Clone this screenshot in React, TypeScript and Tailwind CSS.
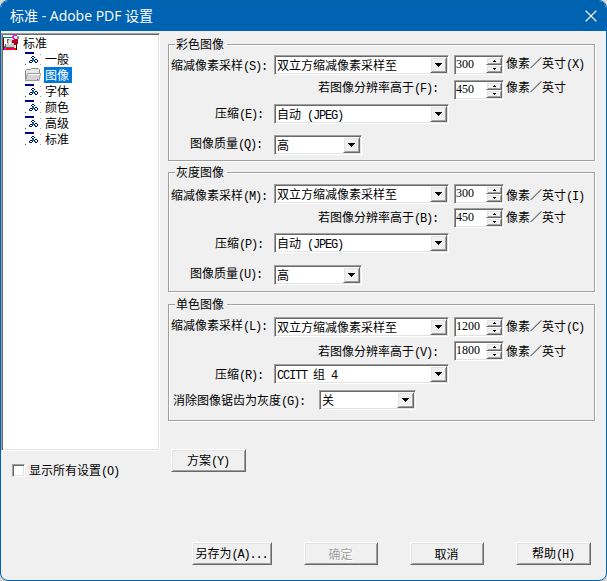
import { Fragment, type ReactNode } from "react";
import { X } from "lucide-react";

const sunken =
    "border border-t-[#a0a0a0] border-l-[#a0a0a0] border-r-white border-b-white shadow-[inset_1px_1px_0_#696969,inset_-1px_-1px_0_#e3e3e3] bg-white";
const raised =
    "border border-t-white border-l-white border-r-[#696969] border-b-[#696969] shadow-[inset_1px_1px_0_#e3e3e3,inset_-1px_-1px_0_#a0a0a0] bg-[#f0f0f0]";

// Half-width characters take 6px each, full-width ones 12px
function Txt({ children }: { children: string }) {
    return (
        <span className="whitespace-pre">
            {children.split(/([\x20-\x7e]+)/).map((part, i) =>
                /^[\x20-\x7e]+$/.test(part) ? (
                    <span key={i} className="font-['Liberation_Mono',monospace] tracking-[-1.2px]">{part}</span>
                ) : (
                    <Fragment key={i}>{part}</Fragment>
                )
            )}
        </span>
    );
}

function Label({ text, className }: { text: string; className: string }) {
    return (
        <div className={`shrink-0 h-3 ${className}`}>
            <Txt>{text}</Txt>
        </div>
    );
}

function Select({ value, className }: { value: string; className: string }) {
    return (
        <div className={`flex h-5 shrink-0 justify-between p-px ${sunken} ${className}`}>
            <div className="pt-[2px] pl-px">
                <Txt>{value}</Txt>
            </div>
            <div className={`flex w-[17px] items-center justify-center ${raised}`}>
                <svg width="7" height="4" viewBox="0 0 7 4" shapeRendering="crispEdges">
                    <path d="M0 0h7v1h-1v1h-1v1h-1v1h-1v-1h-1v-1h-1v-1h-1z" />
                </svg>
            </div>
        </div>
    );
}

function SpinButton({ down = false }: { down?: boolean }) {
    return (
        <div className={`flex h-2 w-4 items-center justify-end pr-[5px] ${raised}`}>
            <svg width="3" height="2" viewBox="0 0 3 2" shapeRendering="crispEdges" className={down ? "rotate-180" : ""}>
                <path d="M1 0h1v1h1v1h-3v-1h1z" />
            </svg>
        </div>
    );
}

function Spinner({ value }: { value: string }) {
    return (
        <div className={`flex h-5 w-[50px] shrink-0 justify-between p-px ${sunken}`}>
            <div className="pt-px font-['Liberation_Serif',serif]">{value}</div>
            <div className="flex flex-col">
                <SpinButton />
                <SpinButton down />
            </div>
        </div>
    );
}

function Group({ title, className, children }: { title: string; className: string; children: ReactNode }) {
    return (
        <div className={`flex w-[427px] flex-col border border-[#a0a0a0] shadow-[1px_1px_0_#fff,inset_1px_1px_0_#fff] ${className}`}>
            <div className="-mt-[7px] ml-[6px] h-3 w-[52px] shrink-0 bg-[#f0f0f0] pl-px">{title}</div>
            {children}
        </div>
    );
}

function Button({ text, className, disabled = false }: { text: string; className: string; disabled?: boolean }) {
    return (
        <button
            disabled={disabled}
            className={`flex h-[23px] items-center justify-center pr-px ${raised} ${disabled ? "text-[#a0a0a0] [text-shadow:1px_1px_0_#fff]" : ""} ${className}`}
        >
            <Txt>{text}</Txt>
        </button>
    );
}

function RootIcon() {
    return (
        <svg width="16" height="16" viewBox="0 0 16 16" shapeRendering="crispEdges">
            <path d="M1 3h9v10h-9z" fill="#fff" />
            <path d="M0 2h10v1h-10z" fill="#008080" />
            <path d="M0 3h1v12h-1z" fill="#600000" />
            <path d="M1 13h12v2h-12z" fill="#f00" />
            <path d="M4 4h5v-1h3v10h-9v-3h1z" fill="#c8c8c8" />
            <path d="M4 4h2v1h-1v3h-1zM2 9h1v3h8v1h-10v-2h1z" fill="#606060" />
            <path d="M9 5h2v-1h4v5h-2v1h-2v-2h-2z" fill="#b00018" />
            <path d="M10 0h4v2h-2v2h-2v-1h-1v-2h1zM1 13h2v2h-2zM8 14h3v1h-3z" fill="#f0f" />
            <path d="M11 1h3v2h-3zM6 6h2v4h-2z" fill="#e8e8e8" />
            <path d="M14 1h2v3h-2z" fill="#909090" />
            <path d="M13 9h1v6h-1z" fill="#400000" />
        </svg>
    );
}

function PageIcon() {
    return (
        <svg width="16" height="16" viewBox="0 0 16 16" shapeRendering="crispEdges">
            <path d="M0 1h9v2h-9z" fill="#000080" />
            <path d="M0 13h1v1h-1z" fill="#008080" />
            <path d="M15 3h1v1h-1zM15 13h1v1h-1z" fill="#a0a0a0" />
            <path d="M7 5h2v1h-2zM6 6h1v1h-1zM9 6h1v1h-1zM7 7h1v1h-1zM5 9h2v1h-2zM4 10h1v1h-1zM7 10h1v1h-1zM5 11h2v1h-2zM10 8h2v1h-2zM12 9h1v2h-1zM9 9h1v1h-1zM10 11h2v1h-2z" fill="#000080" />
            <path d="M8 7h1v2h-1zM7 8h1v2h-1zM8 9h1v1h-1zM10 10h1v1h-1zM4 11h1v1h-1zM9 10h1v1h-1z" fill="#008080" />
        </svg>
    );
}

function FolderIcon() {
    return (
        <svg width="16" height="16" viewBox="0 0 16 16">
            <path d="M.5 13.5v-10l1-1h4l1-1h7l1 1v4" fill="#e8e8e8" stroke="#8c8c8c" />
            <path d="M.5 13.5l2-7h13l-1.500 7z" fill="#d4d4d4" stroke="#9a9a9a" />
            <path d="M3 7.500h12" stroke="#fff" />
            <path d="M12 12h1v1h-1z" fill="#f0f" />
        </svg>
    );
}

const treeItems = ["一般", "图像", "字体", "颜色", "高级", "标准"];

export default function App() {
    return (
        <div className="h-[581px] w-[607px] overflow-hidden bg-[#d8d8d8] font-['Noto_Sans_CJK_SC',sans-serif] text-[12px] leading-3 text-black">
            <div className="flex h-full flex-col overflow-hidden rounded-[8px] border border-[#0063b1] bg-[#f0f0f0]">
                <div className="flex h-[30px] shrink-0 items-center justify-between bg-[#0063b1] pr-[5px] pl-[9px] text-white">
                    <span className="font-['Open_Sans','Noto_Sans_CJK_SC',sans-serif] text-[14px]">标准 - Adobe PDF 设置</span>
                    <X size={20} strokeWidth={1.3} />
                </div>

                <div className="flex flex-1">
                    <div className="flex w-[159px] flex-col pt-[2px]">
                        <div className={`h-[418px] p-px ${sunken}`}>
                            <div className="flex h-4 items-center gap-1">
                                <RootIcon />
                                标准
                            </div>
                            {treeItems.map((item, i) => (
                                <div key={i} className="flex h-4 items-center gap-[3px] pl-[22px]">
                                    {item === "图像" ? <FolderIcon /> : <PageIcon />}
                                    <span className={`flex h-4 items-center pr-[3px] pl-px ${item === "图像" ? "bg-[#0078d7] text-white" : ""}`}>{item}</span>
                                </div>
                            ))}
                        </div>
                        <label className="mt-[13px] ml-[11px] flex gap-1">
                            <span className={`size-[13px] ${sunken}`} />
                            <Txt>显示所有设置(O)</Txt>
                        </label>
                    </div>

                    <div className="flex flex-col pt-[13px] pl-2">
                        <Group title="彩色图像" className="h-[117px]">
                            <div className="flex h-[30px] items-start pt-[5px]">
                                <Label text="缩减像素采样(S):" className="mt-1 w-[105px] pl-[2px]" />
                                <Select value="双立方缩减像素采样至" className="mr-[5px] w-[175px]" />
                                <Spinner value="300" />
                                <Label text="像素／英寸(X)" className="mt-[2px] ml-[2px]" />
                            </div>
                            <div className="flex h-6 items-start">
                                <Label text="若图像分辨率高于(F):" className="mt-px w-[285px] pl-[149px]" />
                                <Spinner value="450" />
                                <Label text="像素／英寸" className="mt-px ml-[2px]" />
                            </div>
                            <div className="flex h-[31px] items-start">
                                <Label text="压缩(E):" className="mt-[3px] w-[105px] pl-[46px]" />
                                <Select value="自动 (JPEG)" className="w-[175px]" />
                            </div>
                            <div className="flex items-start">
                                <Label text="图像质量(Q):" className="mt-[2px] w-[105px] pl-[21px]" />
                                <Select value="高" className="w-[88px]" />
                            </div>
                        </Group>

                        <Group title="灰度图像" className="mt-[11px] h-[120px]">
                            <div className="flex h-[30px] items-start pt-[6px]">
                                <Label text="缩减像素采样(M):" className="mt-[5px] w-[105px] pl-[2px]" />
                                <Select value="双立方缩减像素采样至" className="mr-[5px] w-[175px]" />
                                <Spinner value="300" />
                                <Label text="像素／英寸(I)" className="mt-[5px] ml-[2px]" />
                            </div>
                            <div className="flex h-[25px] items-start">
                                <Label text="若图像分辨率高于(B):" className="mt-[3px] w-[285px] pl-[149px]" />
                                <Spinner value="450" />
                                <Label text="像素／英寸" className="mt-[3px] ml-[2px]" />
                            </div>
                            <div className="flex h-8 items-start">
                                <Label text="压缩(P):" className="mt-1 w-[105px] pl-[46px]" />
                                <Select value="自动 (JPEG)" className="w-[175px]" />
                            </div>
                            <div className="flex items-start">
                                <Label text="图像质量(U):" className="mt-[2px] w-[105px] pl-[21px]" />
                                <Select value="高" className="w-[88px]" />
                            </div>
                        </Group>

                        <Group title="单色图像" className="mt-3 h-[117px]">
                            <div className="flex h-[31px] items-start pt-[7px]">
                                <Label text="缩减像素采样(L):" className="mt-[2px] w-[105px] pl-[2px]" />
                                <Select value="双立方缩减像素采样至" className="mr-[5px] w-[175px]" />
                                <Spinner value="1200" />
                                <Label text="像素／英寸(C)" className="mt-[3px] ml-[2px]" />
                            </div>
                            <div className="flex h-[23px] items-start">
                                <Label text="若图像分辨率高于(V):" className="mt-1 w-[285px] pl-[149px]" />
                                <Spinner value="1800" />
                                <Label text="像素／英寸" className="mt-1 ml-[2px]" />
                            </div>
                            <div className="flex h-[26px] items-start">
                                <Label text="压缩(R):" className="mt-1 w-[105px] pl-[46px]" />
                                <Select value="CCITT 组 4" className="w-[175px]" />
                            </div>
                            <div className="flex items-start">
                                <Label text="消除图像锯齿为灰度(G):" className="mt-[4px] w-[150px] pl-[4px]" />
                                <Select value="关" className="w-[97px]" />
                            </div>
                        </Group>

                        <Button text="方案(Y)" className="mt-7 ml-[3px] w-[75px]" />
                        <div className="mt-[70px] ml-6 flex">
                            <Button text="另存为(A)..." className="mr-8 w-[80px]" />
                            <Button text="确定" className="mr-8 w-[74px]" disabled />
                            <Button text="取消" className="mr-8 w-[74px]" />
                            <Button text="帮助(H)" className="w-[75px]" />
                        </div>
                    </div>
                </div>
            </div>
        </div>
    );
}
